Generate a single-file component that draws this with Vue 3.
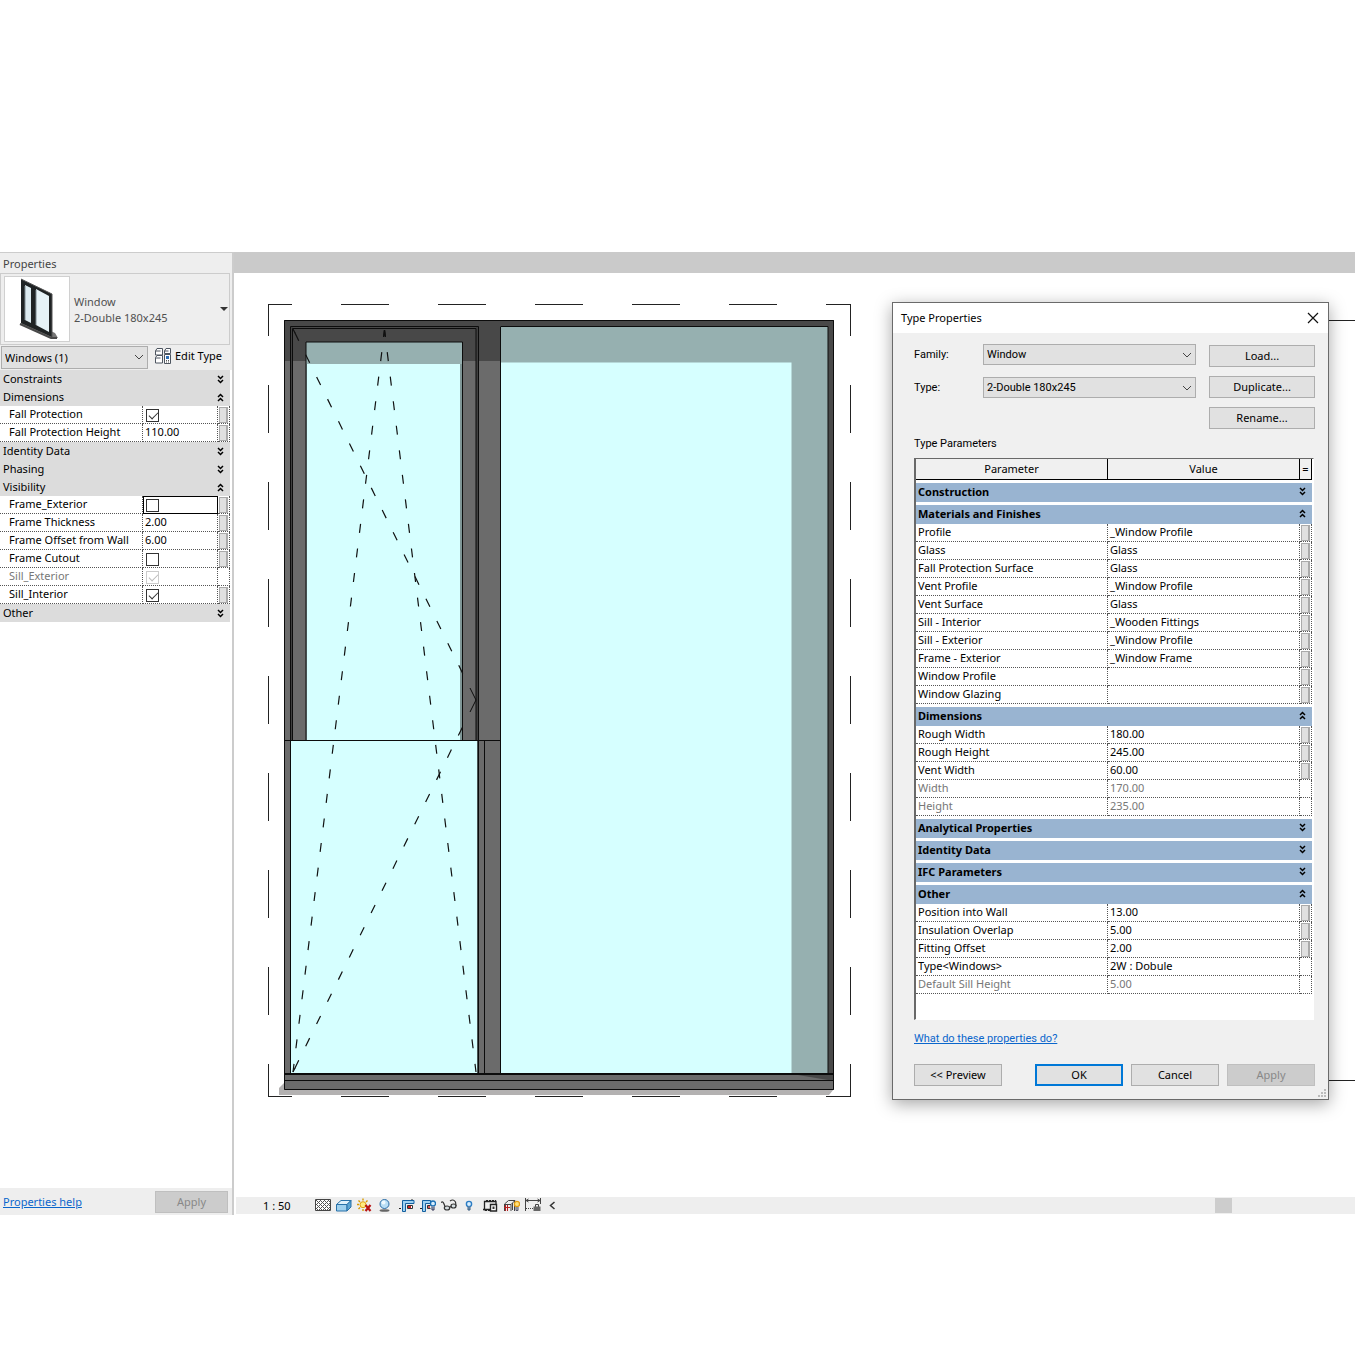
<script setup>
import { reactive } from 'vue'

const instance = reactive([
  { name: 'Constraints', open: false, rows: [] },
  {
    name: 'Dimensions',
    open: true,
    rows: [
      { name: 'Fall Protection', check: true },
      { name: 'Fall Protection Height', value: '110.00' },
    ],
  },
  { name: 'Identity Data', open: false, rows: [] },
  { name: 'Phasing', open: false, rows: [] },
  {
    name: 'Visibility',
    open: true,
    rows: [
      { name: 'Frame_Exterior', check: false, current: true },
      { name: 'Frame Thickness', value: '2.00' },
      { name: 'Frame Offset from Wall', value: '6.00' },
      { name: 'Frame Cutout', check: false },
      { name: 'Sill_Exterior', check: true, locked: true },
      { name: 'Sill_Interior', check: true },
    ],
  },
  { name: 'Other', open: false, rows: [] },
])

const types = reactive([
  { name: 'Construction', open: false, rows: [] },
  {
    name: 'Materials and Finishes',
    open: true,
    rows: [
      { name: 'Profile', value: '_Window Profile' },
      { name: 'Glass', value: 'Glass' },
      { name: 'Fall Protection Surface', value: 'Glass' },
      { name: 'Vent Profile', value: '_Window Profile' },
      { name: 'Vent Surface', value: 'Glass' },
      { name: 'Sill - Interior', value: '_Wooden Fittings' },
      { name: 'Sill - Exterior', value: '_Window Profile' },
      { name: 'Frame - Exterior', value: '_Window Frame' },
      { name: 'Window Profile', value: '' },
      { name: 'Window Glazing', value: '' },
    ],
  },
  {
    name: 'Dimensions',
    open: true,
    rows: [
      { name: 'Rough Width', value: '180.00' },
      { name: 'Rough Height', value: '245.00' },
      { name: 'Vent Width', value: '60.00' },
      { name: 'Width', value: '170.00', locked: true },
      { name: 'Height', value: '235.00', locked: true },
    ],
  },
  { name: 'Analytical Properties', open: false, rows: [] },
  { name: 'Identity Data', open: false, rows: [] },
  { name: 'IFC Parameters', open: false, rows: [] },
  {
    name: 'Other',
    open: true,
    rows: [
      { name: 'Position into Wall', value: '13.00' },
      { name: 'Insulation Overlap', value: '5.00' },
      { name: 'Fitting Offset', value: '2.00' },
      { name: 'Type<Windows>', value: '2W : Dobule', plain: true },
      { name: 'Default Sill Height', value: '5.00', locked: true },
    ],
  },
])

const chevron = (open) =>
  open ? 'M1 4 3.500 1.500 6 4M1 8 3.500 5.500 6 8' : 'M1 1 3.500 3.500 6 1M1 5 3.500 7.500 6 5'
</script>

<template>
  <main class="app">
    <aside class="panel">
      <h2 class="panel-title">Properties</h2>
      <div class="type-area">
        <button class="type-card" type="button">
          <span class="thumb">
            <svg viewBox="0 0 64 64" width="64" height="64" aria-hidden="true">
              <path d="M15 47 46 61 53 61 50 56 22 43Z" fill="#777" />
              <path d="M16 2 47 17 47 60 16 46Z" fill="#1f2324" />
              <path d="M20 8 26 11 26 46 20 43Z" fill="#dcebf0" />
              <path d="M31 12 44 19 44 55 31 48Z" fill="#e6f3f7" />
              <path d="M20 9v34M31 13v35" stroke="#7d8a8f" />
              <path d="M15 47 46 61h6" fill="none" stroke="#4a4a4a" stroke-width="2" />
              <path d="M16 2 47 17v43" fill="none" stroke="#555" />
            </svg>
          </span>
          <span class="type-name">Window<br />2-Double 180x245</span>
          <svg class="drop" viewBox="0 0 8 4" width="8" height="4" aria-hidden="true"><path d="M0 0h8L4 4Z" fill="#333" /></svg>
        </button>
      </div>
      <div class="filter">
        <span class="select filter-select">
          <select aria-label="Element filter"><option>Windows (1)</option></select>
          <svg viewBox="0 0 10 6" width="10" height="6" aria-hidden="true"><path d="M1 1l4 4 4-4" /></svg>
        </span>
        <button class="edit-type" type="button">
          <svg viewBox="0 0 16 16" width="16" height="16" aria-hidden="true">
            <g fill="#fff" stroke="#4d5560">
              <path d="M.5 3 2 .5h5.500v6.500h-7ZM.5 3h5" />
              <path d="M9.500 3 11 .5h4.500v5h-6ZM9.500 3h4" />
              <path d="M.5 9.500 2 7.500h5.500v7.500h-7ZM.5 10h5" />
              <path d="M9.500 6.500h6v9h-6Z" />
            </g>
            <path d="M11 8h3v3h-3Z" fill="#2f6fb5" />
            <path d="M11 12.500h1M13 12.500h1M11 14h1M13 14h1" stroke="#555" />
          </svg>
          Edit Type
        </button>
      </div>
      <table class="grid instance">
        <colgroup><col class="c-name" /><col class="c-value" /><col class="c-more" /></colgroup>
        <tbody v-for="group in instance" :key="group.name">
          <tr>
            <th colspan="3" scope="rowgroup">
              <button class="group" type="button" :aria-expanded="group.open" @click="group.open = !group.open">
                {{ group.name }}
                <svg viewBox="0 0 7 9" width="7" height="9" aria-hidden="true"><path :d="chevron(group.open)" /></svg>
              </button>
            </th>
          </tr>
          <template v-if="group.open">
            <tr v-for="row in group.rows" :key="row.name" :class="{ locked: row.locked }">
              <td>{{ row.name }}</td>
              <td :class="{ current: row.current }">
                <input v-if="'check' in row" v-model="row.check" type="checkbox" :disabled="row.locked" :aria-label="row.name" />
                <template v-else>{{ row.value }}</template>
              </td>
              <td><button v-if="!row.locked" class="more" type="button" :aria-label="'Associate ' + row.name"></button></td>
            </tr>
          </template>
        </tbody>
      </table>
      <footer class="panel-foot">
        <a href="#help">Properties help</a>
        <button class="btn" type="button" disabled>Apply</button>
      </footer>
    </aside>

    <section class="view">
      <div class="tabs"></div>
      <div class="canvas">
        <svg class="drawing" viewBox="268 304 583 793" width="583" height="793" role="img" aria-label="Window elevation">
          <g fill="none" stroke="#222" stroke-dasharray="48 49">
            <path d="M268 304.500H851M268 1096.500H851" stroke-dashoffset="24" />
            <path d="M268.500 304V1097M850.500 304V1097" stroke-dashoffset="16" />
          </g>
          <path d="M279 1088 284 1083H834V1089L829 1095H279Z" fill="#b3b1b1" />
          <path d="M284 320H834V1090H284Z" fill="#6b6b6b" />
          <path d="M284 320H834V1074H828V361H284Z" fill="#484848" />
          <path d="M792 1074H834V1081Z" fill="#484848" />
          <!-- fixed pane -->
          <path d="M500 326H828V1074H500Z" fill="#96b0b0" />
          <path d="M500 362.500H791.500V1074H500Z" fill="#d6ffff" />
          <!-- vent and lower pane -->
          <path d="M291 326H293V740H291ZM476 326H479V740H476Z" fill="#404040" />
          <path d="M306 342H462V740H306Z" fill="#7f9797" />
          <path d="M306 342H462V364H306Z" fill="#96b0b0" />
          <path d="M307 364H460V740H307Z" fill="#d6ffff" />
          <path d="M291 741H478V1074H291Z" fill="#d6ffff" />
          <path d="M477 741H479V1074H477Z" fill="#4a5555" />
          <g fill="none" stroke="#0c0c0c">
            <path d="M284.500 320.500H833.500V1089.500H284.500Z" />
            <path d="M290.500 740V326.500H478.500V740M292.500 740V328.500H476V740" />
            <path d="M306 740V342H462.500V740" />
            <path d="M284 740.500H500M290.500 740V1074M478.500 740V1074M484.500 740V1074" />
            <path d="M500.500 1074V326.500H828V1074" />
            <path d="M284 1080.500H834M470 688 476 700 470 712" />
            <path d="M284 1074H834" stroke-width="2" />
          </g>
          <g fill="none" stroke="#111" stroke-width="1.200">
            <path d="M293 329 295 333M293 1072 295 1068M384.500 330 383.500 337M384.500 330 385.500 337" />
            <path d="M293 329 463 674M293 1072 463 726" stroke-dasharray="9 15.730" stroke-dashoffset="-4" />
            <path d="M384.500 330 293 1072M384.500 330 476 1072" stroke-dasharray="9 15.730" stroke-dashoffset="-22.300" />
          </g>
        </svg>
        <div class="section-edge"></div>

        <section class="dialog" role="dialog" aria-labelledby="dialog-title">
          <header class="dialog-bar">
            <h2 id="dialog-title">Type Properties</h2>
            <button type="button" aria-label="Close">
              <svg viewBox="0 0 12 12" width="12" height="12"><path d="M1 1l10 10M11 1 1 11" stroke="#111" stroke-width="1.200" fill="none" /></svg>
            </button>
          </header>
          <div class="dialog-body">
            <div class="choose">
              <div class="fields">
                <label for="family">Family:</label>
                <span class="select">
                  <select id="family"><option>Window</option></select>
                  <svg viewBox="0 0 10 6" width="10" height="6" aria-hidden="true"><path d="M1 1l4 4 4-4" /></svg>
                </span>
                <label for="type">Type:</label>
                <span class="select">
                  <select id="type"><option>2-Double 180x245</option></select>
                  <svg viewBox="0 0 10 6" width="10" height="6" aria-hidden="true"><path d="M1 1l4 4 4-4" /></svg>
                </span>
              </div>
              <div class="side">
                <button class="btn" type="button">Load...</button>
                <button class="btn" type="button">Duplicate...</button>
                <button class="btn" type="button">Rename...</button>
              </div>
            </div>
            <h3 class="caption">Type Parameters</h3>
            <div class="well">
              <table class="grid types">
                <colgroup><col class="c-name" /><col class="c-value" /><col class="c-more" /></colgroup>
                <thead>
                  <tr><th scope="col">Parameter</th><th scope="col">Value</th><th scope="col">=</th></tr>
                </thead>
                <tbody v-for="group in types" :key="group.name">
                  <tr>
                    <th colspan="3" scope="rowgroup">
                      <button class="group" type="button" :aria-expanded="group.open" @click="group.open = !group.open">
                        {{ group.name }}
                        <svg viewBox="0 0 7 9" width="7" height="9" aria-hidden="true"><path :d="chevron(group.open)" /></svg>
                      </button>
                    </th>
                  </tr>
                  <template v-if="group.open">
                    <tr v-for="row in group.rows" :key="row.name" :class="{ locked: row.locked }">
                      <td>{{ row.name }}</td>
                      <td>{{ row.value }}</td>
                      <td><button v-if="!row.locked && !row.plain" class="more" type="button" :aria-label="'Associate ' + row.name"></button></td>
                    </tr>
                  </template>
                </tbody>
              </table>
            </div>
            <a class="help" href="#types">What do these properties do?</a>
            <footer class="actions">
              <button class="btn preview" type="button">&lt;&lt; Preview</button>
              <button class="btn primary" type="button">OK</button>
              <button class="btn" type="button">Cancel</button>
              <button class="btn" type="button" disabled>Apply</button>
            </footer>
          </div>
          <svg class="grip" viewBox="0 0 8 8" width="8" height="8" aria-hidden="true">
            <path d="M6 0h2v2H6ZM3 3h2v2H3ZM6 3h2v2H6ZM0 6h2v2H0ZM3 6h2v2H3ZM6 6h2v2H6Z" fill="#bbb" />
          </svg>
        </section>
      </div>

      <div class="status">
        <button class="scale" type="button">1 : 50</button>
        <div class="tools">
          <button type="button" aria-label="Detail level">
            <svg viewBox="0 0 16 16">
              <path d="M.5 1.500h15v11H.5Z" fill="#fff" stroke="#444" />
              <g stroke="#555">
                <path d="M1 2.500h14M1 6.500h14M1 10.500h14" stroke-dasharray="1 3" />
                <path d="M2 3.500h13M2 5.500h13M2 7.500h13M2 9.500h13M2 11.500h13" stroke-dasharray="1 1" />
                <path d="M3 4.500h12M3 8.500h12" stroke-dasharray="1 3" />
              </g>
            </svg>
          </button>
          <button type="button" aria-label="Visual style">
            <svg viewBox="0 0 16 16"><g stroke="#2871a8" stroke-linejoin="round"><path d="M.5 6.500 5 2.500h10l-4 4Z" fill="#dff1fb" /><path d="M.5 6.500H11v6.500H.5Z" fill="#9ed0ee" /><path d="M11 6.500l4-4V9l-4 4Z" fill="#5ba5d3" /></g></svg>
          </button>
          <button type="button" aria-label="Sun path off">
            <svg viewBox="0 0 16 16"><path d="M6 .5v2M6 11v2M0 6.500h2M1.500 2.500l1.500 1.500M10.500 2.500 9 4M1.500 11 3 9.500" stroke="#d99a00" stroke-width="1.400" /><circle cx="6" cy="6.700" r="3" fill="#ffeb80" stroke="#e0a010" /><path d="M8.500 7l5 6M13.500 7l-5 6" stroke="#b81414" stroke-width="2.200" /></svg>
          </button>
          <button type="button" aria-label="Shadows off">
            <svg viewBox="0 0 16 16"><ellipse cx="6.500" cy="12.500" rx="5" ry="1.300" fill="#666" /><circle cx="6.500" cy="6" r="4.500" fill="#b9def5" stroke="#2d6da6" /><circle cx="5.500" cy="4.500" r="2" fill="#f0faff" /></svg>
          </button>
          <button type="button" aria-label="Crop view">
            <svg viewBox="0 0 16 16" fill="none">
              <path d="M0 10.500h5M13 1v2" stroke="#222" stroke-dasharray="2 1" />
              <path d="M3.500 13.500v-11h11.500v3H6.500v8Z" fill="#9fd2f2" stroke="#135f9f" />
              <path d="M8.500 10.500V7.500h5v3Z" fill="#fff" stroke="#333" />
              <path d="M9 9h3" stroke="#d02020" stroke-width="2" />
            </svg>
          </button>
          <button type="button" aria-label="Show crop region">
            <svg viewBox="0 0 16 16" fill="none">
              <path d="M0 10.500h4" stroke="#222" stroke-dasharray="2 1" />
              <path d="M2.500 13.500v-11h8v3H5.500v8Z" fill="#9fd2f2" stroke="#135f9f" />
              <path d="M7.500 10.500v-3h3M7.500 10.500h3" stroke="#333" />
              <path d="M8 9h2" stroke="#d02020" stroke-width="1.500" />
              <circle cx="13" cy="5.500" r="2.500" fill="#d8efff" stroke="#1c70b5" stroke-width="1.300" />
              <path d="M12 8.500V12h2V8.500" fill="#b7cfe2" stroke="#335" />
            </svg>
          </button>
          <button type="button" aria-label="Temporary hide">
            <svg viewBox="0 0 16 16" fill="none" stroke="#333" stroke-width="1.200"><path d="M0 4.500c2-1.500 2.500 0 4 4L7 10l4-2M9 3c2-1.500 4-1.500 5.500 1l.5 4" /><ellipse cx="6" cy="10" rx="2.700" ry="2" fill="#d5dde0" /><ellipse cx="12.500" cy="8" rx="2.500" ry="2" fill="#d5dde0" /></svg>
          </button>
          <button type="button" aria-label="Reveal hidden elements">
            <svg viewBox="0 0 16 16" fill="none"><circle cx="7" cy="6" r="2.600" fill="#d8efff" stroke="#2b7cc4" stroke-width="1.400" /><path d="M6 8.500V12h2V8.500" fill="#7ea6c8" stroke="#3a5c80" /></svg>
          </button>
          <button type="button" aria-label="Temporary view properties">
            <svg viewBox="0 0 16 16" fill="none"><path d="M1.500 12.500V3.500H13V6M0 11.500h7" stroke="#222" stroke-width="1.300" /><path d="M3 2.500h10M2 12.500h5" stroke="#222" stroke-dasharray="2 1" /><path d="M7.500 6.500h6v6.500h-6Z" fill="#fff" stroke="#222" stroke-width="1.400" /><path d="M9.500 8.500h2v2.500h-2Z" fill="#333" /></svg>
          </button>
          <button type="button" aria-label="Analytical model">
            <svg viewBox="0 0 16 16" fill="none"><path d="M.5 13V6l4-3.500H11l-4 4H1M7 6.500V13M3.500 6.500V13M10.500 3v10M8.500 5v7" stroke="#444" /><path d="M0 9.500h6M3.500 7v6M1.500 7v6" stroke="#b82020" /><circle cx="13" cy="6" r="2.600" fill="#ffe27a" stroke="#e09a10" stroke-width="1.300" /><path d="M12 9v3.500h2V9" fill="#c0c8d0" stroke="#556" /></svg>
          </button>
          <button type="button" aria-label="Reveal constraints">
            <svg viewBox="0 0 16 16" fill="none"><path d="M.5 0v13M15.500 0v6M1 2.500h14M3.500 1 1 2.500 3.500 4M12.500 1l2.500 1.500L12.500 4" stroke="#444" /><path d="M1 10.500h7" stroke="#444" stroke-dasharray="1 1" /><path d="M10.500 9V6.500h3V9" stroke="#444" /><path d="M8.500 8.500h7v4.500h-7Z" fill="#666" /></svg>
          </button>
          <button type="button" aria-label="Collapse">
            <svg viewBox="0 0 16 16" fill="none"><path d="M8.500 4 4.500 7.500l4 3.500" stroke="#333" stroke-width="1.500" /></svg>
          </button>
        </div>
        <div class="scroll"><span></span></div>
      </div>
    </section>
  </main>
</template>

<style>
body {
  margin: 0;
  background: #fff;
}
</style>

<style scoped>
.app {
  display: flex;
  padding: 252px 0 139px;
  overflow: hidden;
  font: 12px/16px 'Noto Sans', 'Open Sans', sans-serif;
  color: #000;
}
.app * {
  box-sizing: border-box;
}
button,
select {
  font: inherit;
  color: inherit;
}
button {
  padding: 0;
  border: 0;
  background: none;
}
a {
  color: #0a66cc;
}
h2,
h3 {
  margin: 0;
  font-size: inherit;
  font-weight: 400;
}

.panel {
  flex: none;
  display: flex;
  flex-direction: column;
  width: 234px;
  border-top: 1px solid #ccc;
  border-right: 2px solid #ccc;
  background: #fff;
  font-size: 11px;
}
.panel-title {
  padding: 3px 3px 1px;
  background: #eee;
  color: #444;
}
.type-area {
  padding-right: 2px;
  background: #eee;
}
.type-card {
  display: flex;
  align-items: center;
  gap: 4px;
  width: 100%;
  height: 72px;
  padding: 0 1px 0 3px;
  border: 1px solid #ccc;
  color: #505050;
  text-align: left;
}
.thumb {
  width: 66px;
  height: 66px;
  border: 1px solid #d0d0d0;
  background: #fff;
}
.type-name {
  flex: 1;
  padding-top: 2px;
}
.filter {
  display: flex;
  align-items: center;
  gap: 7px;
  height: 25px;
  padding-left: 1px;
  background: #eee;
}
.filter-select {
  width: 147px;
}
.edit-type {
  display: flex;
  align-items: center;
  gap: 4px;
  padding-bottom: 3px;
}
.select {
  position: relative;
  display: block;
}
.select select {
  display: block;
  width: 100%;
  height: 21px;
  padding: 0 20px 0 3px;
  border: 1px solid #adadad;
  border-radius: 0;
  background: #e1e1e1;
  appearance: none;
}
.select svg {
  position: absolute;
  top: 8px;
  right: 4px;
  fill: none;
  stroke: #444;
  pointer-events: none;
}
.filter-select select {
  height: 23px;
}

.grid {
  width: 100%;
  border-collapse: separate;
  border-spacing: 0;
  table-layout: fixed;
  font-size: 11px;
  line-height: 16px;
}
.grid th {
  padding: 0;
  font-weight: 400;
}
.grid td {
  height: 18px;
  padding: 0 2px 1px;
  border-right: 1px dotted #555;
  border-bottom: 1px dotted #555;
  white-space: nowrap;
}
.grid td:last-child {
  padding: 1px 1px 0;
}
.group {
  display: flex;
  align-items: center;
  justify-content: space-between;
  width: 100%;
  height: 18px;
  text-align: left;
}
.group svg {
  fill: none;
  stroke: #000;
  stroke-width: 1.5px;
}
.locked {
  color: #777;
}
.more {
  display: block;
  width: 100%;
  height: 16px;
  border: 1px solid #aaa;
  border-right-width: 2px;
  background: #e0e0e0;
}

.instance {
  width: 230px;
}
.instance .c-name {
  width: 143px;
}
.instance .c-value {
  width: 75px;
}
.instance .c-more {
  width: 12px;
}
.instance .group {
  padding: 0 6px 0 3px;
  background: #dcdcdc;
}
.instance td:first-child {
  padding-left: 9px;
}
.instance .current {
  outline: 1px solid #000;
  outline-offset: -1px;
}
.instance input {
  display: block;
  position: relative;
  width: 13px;
  height: 13px;
  margin: 2px 0 0 1px;
  border: 1px solid #333;
  background: #fff;
  appearance: none;
}
.instance input:checked::before {
  content: '';
  position: absolute;
  top: 2px;
  left: 2px;
  width: 8px;
  height: 4px;
  border: solid #333;
  border-width: 0 0 1px 1px;
  transform: rotate(-45deg);
}
.instance input:disabled {
  border-color: #ccc;
}
.instance input:disabled::before {
  border-color: #bbb;
}
.panel-foot {
  display: flex;
  align-items: center;
  justify-content: space-between;
  height: 27px;
  margin-top: auto;
  padding: 0 4px 0 3px;
  background: #eee;
}
.panel-foot .btn {
  width: 73px;
}

.btn {
  height: 22px;
  border: 1px solid #adadad;
  background: #e1e1e1;
  text-align: center;
}
.btn:disabled {
  border-color: #bfbfbf;
  background: #ccc;
  color: #888;
}
.btn.primary {
  border: 2px solid #0078d7;
}

.view {
  flex: 1;
  display: flex;
  flex-direction: column;
  min-width: 0;
  padding-bottom: 1px;
}
.tabs {
  height: 21px;
  background: #cacaca;
}
.canvas {
  position: relative;
  display: flex;
  align-items: flex-start;
  padding: 31px 0 100px 34px;
}
.drawing {
  flex: none;
  display: block;
}
.section-edge {
  flex: 1;
  height: 761px;
  margin: 16px 0 0 200px;
  border: solid #222;
  border-width: 1px 0;
}

.dialog {
  position: absolute;
  top: 29px;
  left: 658px;
  width: 437px;
  border: 1px solid #6a6a6a;
  background: #f0f0f0;
  box-shadow: 0 4px 16px rgba(0, 0, 0, 0.35);
  font-size: 11px;
}
.dialog-bar {
  display: flex;
  align-items: center;
  justify-content: space-between;
  height: 30px;
  padding: 0 9px 0 8px;
  background: #fff;
}
.dialog-bar svg {
  display: block;
}
.dialog-body {
  padding: 11px 13px 13px 21px;
}
.choose {
  display: flex;
  gap: 13px;
}
.fields {
  flex: 1;
  display: grid;
  grid-template-columns: 69px 1fr;
  row-gap: 12px;
  align-items: center;
  align-content: start;
}
.fields,
.caption,
.help {
  font-family: Roboto, 'Noto Sans', sans-serif;
}
.side {
  display: flex;
  flex-direction: column;
  gap: 9px;
  width: 106px;
  padding-top: 1px;
}
.caption {
  margin: 7px 0 6px;
}
.well {
  min-height: 562px;
  margin-right: 1px;
  border: 1px solid #fff;
  border-top-color: #696969;
  border-left: 2px solid #696969;
  background: #fff;
}
.types {
  width: calc(100% - 1px);
}
.types .c-value {
  width: 192px;
}
.types .c-more {
  width: 12px;
}
.types thead th {
  height: 21px;
  border-right: 1px solid #000;
  border-bottom: 1px solid #000;
  background: #f0f0f0;
}
.types tbody th {
  border-top: 3px solid #fff;
}
.types .group {
  height: 19px;
  padding: 0 6px 2px 2px;
  background: #99b4d1;
  font-weight: 700;
}
.help {
  display: block;
  margin: 11px 0 17px;
}
.actions {
  display: flex;
  justify-content: flex-end;
  gap: 8px;
}
.actions .btn {
  width: 88px;
}
.actions .preview {
  margin-right: auto;
}
.grip {
  position: absolute;
  right: 2px;
  bottom: 2px;
}

.status {
  display: flex;
  align-items: center;
  height: 17px;
  margin-left: 2px;
  background: #eee;
}
.scale {
  width: 79px;
  padding-left: 27px;
  text-align: left;
  font-size: 11px;
}
.tools {
  display: flex;
  gap: 5px;
}
.tools svg {
  display: block;
  width: 16px;
  height: 16px;
}
.scroll {
  flex: 1;
  display: flex;
  justify-content: flex-end;
  padding-right: 123px;
}
.scroll span {
  width: 17px;
  height: 15px;
  background: #cdcdcd;
}
</style>
